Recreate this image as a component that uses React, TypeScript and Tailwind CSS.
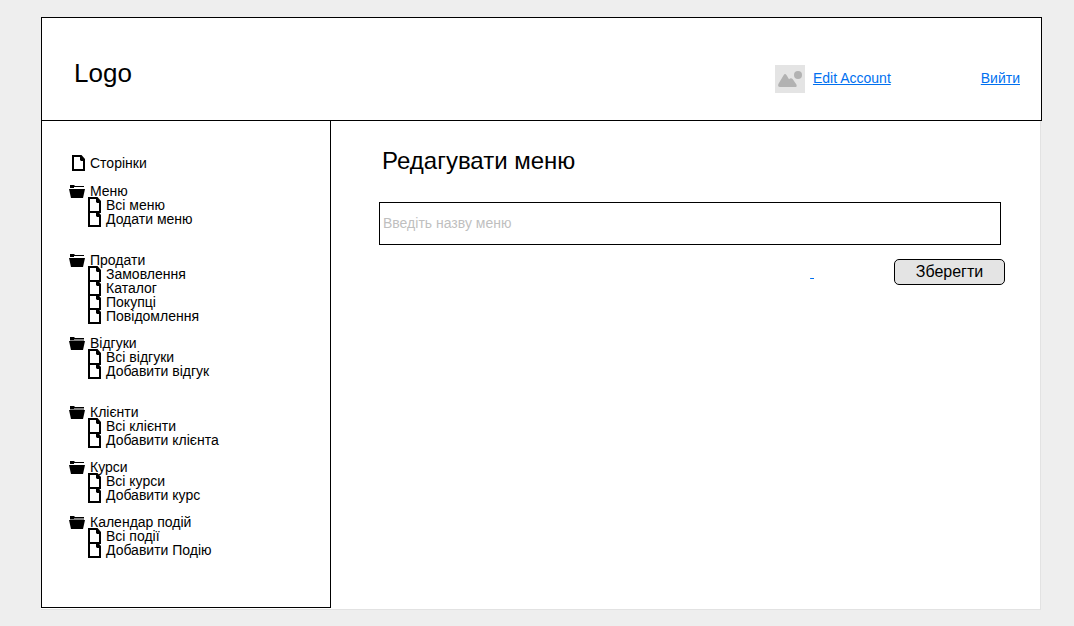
import type { ReactNode } from "react";

type Group = { title: string; items: string[]; gap: string; shaded: boolean };

const groups: Group[] = [
  { title: "Меню", items: ["Всі меню", "Додати меню"], gap: "mt-3.5", shaded: false },
  { title: "Продати", items: ["Замовлення", "Каталог", "Покупці", "Повідомлення"], gap: "mt-[27px]", shaded: false },
  { title: "Відгуки", items: ["Всі відгуки", "Добавити відгук"], gap: "mt-[13px]", shaded: true },
  { title: "Клієнти", items: ["Всі клієнти", "Добавити клієнта"], gap: "mt-[27px]", shaded: true },
  { title: "Курси", items: ["Всі курси", "Добавити курс"], gap: "mt-[13px]", shaded: false },
  { title: "Календар подій", items: ["Всі події", "Добавити Подію"], gap: "mt-[13px]", shaded: true },
];

function FileIcon() {
  return (
    <svg width="13" height="16" viewBox="0 0 13 16" className="shrink-0" aria-hidden="true">
      <path d="M0 0H9.5L13 4V16H0Z" fill="#000" />
      <path d="M2 2H8V5L9 6H11V14H2Z" fill="#fff" />
    </svg>
  );
}

function FolderIcon({ shaded }: { shaded: boolean }) {
  return (
    <svg width="16" height="16" viewBox="0 0 16 16" className="shrink-0" aria-hidden="true">
      <path d="M1 2H5L6 3H15V4H1Z" fill="#000" />
      <path d="M1 4H5V5H1Z" fill="#000" />
      {shaded && <path d="M5 4H15V6H1V5H5Z" fill="#808080" />}
      <path d="M0 6H16L14 15H2Z" fill="#000" />
    </svg>
  );
}

function Row({ icon, children }: { icon: ReactNode; children: ReactNode }) {
  return (
    <a href="#" className="flex h-3.5 items-center gap-[5px]">
      {icon}
      <span>{children}</span>
    </a>
  );
}

export default function App() {
  return (
    <div className="min-h-screen bg-[#eeeeee] pt-[17px] pr-8 pb-4 pl-[41px] font-['Liberation_Sans',Arial,sans-serif] text-black">
      <header className="flex h-[104px] items-center justify-between border border-black bg-white pr-[21px] pl-8">
        <div className="pt-2 text-[26px] leading-8">Logo</div>
        <div className="flex items-center pt-5 text-sm text-[#0070f0]">
          <svg width="30" height="28" viewBox="0 0 30 28" className="mr-2" aria-hidden="true">
            <rect width="30" height="28" fill="#e4e4e4" />
            <circle cx="23" cy="10" r="4" fill="#b2b2b2" />
            <path d="M3.4 19L8.6 10.2Q10 8 11.6 10.2L14 14.2Q16 12.2 17.8 14.2L21.4 19.4Q22.4 22 20 22H5Q2.4 22 3.4 19Z" fill="#b2b2b2" />
          </svg>
          <a href="#" className="mr-[90px] pb-0.5 underline">Edit Account</a>
          <a href="#" className="pb-0.5 underline">Вийти</a>
        </div>
      </header>

      <div className="mr-px flex border-r border-b border-[#e2e2e2] bg-white pb-px">
        <nav className="w-[290px] shrink-0 border-x border-b border-black pt-[35px] pb-[50px] pl-[27px] text-sm leading-[14px]">
          <div className="pl-[3px]">
            <Row icon={<FileIcon />}>Сторінки</Row>
          </div>
          {groups.map((g) => (
            <div key={g.title} className={g.gap}>
              <Row icon={<FolderIcon shaded={g.shaded} />}>{g.title}</Row>
              <div className="pl-[19px]">
                {g.items.map((item) => (
                  <Row key={item} icon={<FileIcon />}>{item}</Row>
                ))}
              </div>
            </div>
          ))}
        </nav>

        <main className="grow pt-6 pr-[39px] pl-12">
          <h1 className="pl-[3px] text-2xl">Редагувати меню</h1>
          <input
            type="text"
            aria-label="Назва меню"
            placeholder="Введіть назву меню"
            className="mt-[25px] block h-[43px] w-full border border-black px-[3px] pb-0.5 text-sm placeholder:text-[#bfbfbf]"
          />
          <div className="mt-3.5 -mr-1 flex items-center justify-end gap-20">
            <a href="#" aria-label="Назад" className="text-sm text-[#0070f0] underline">&nbsp;</a>
            <button type="button" className="h-[26px] w-[111px] rounded-[5px] border border-black bg-[#e4e4e4] text-base leading-6">
              Зберегти
            </button>
          </div>
        </main>
      </div>
    </div>
  );
}
